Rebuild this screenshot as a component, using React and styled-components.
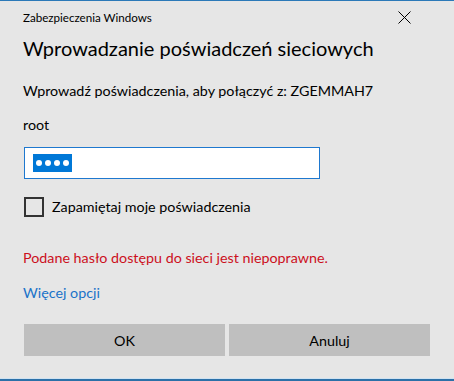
import React from 'react';
import styled, { createGlobalStyle } from 'styled-components';

const GlobalStyle = createGlobalStyle`
  html, body {
    margin: 0;
    padding: 0;
    background: #e6e6e6;
  }
  * {
    box-sizing: border-box;
  }
`;

const Window = styled.div`
  width: 454px;
  height: 381px;
  display: flex;
  flex-direction: column;
  background: #e6e6e6;
  border-top: 1px solid #2b79b8;
  border-bottom: 2px solid #2c70a8;
  box-shadow: inset 0 -1px 0 #cfe2f1;
  font-family: 'Segoe UI', Lato, 'Noto Sans', sans-serif;
  color: #000;
`;

const TitleBar = styled.div`
  height: 33px;
  display: flex;
  align-items: center;
  justify-content: space-between;
  padding: 0 43px 0 23px;
  font-size: 11.6px;
  color: #000;
`;

const Content = styled.div`
  display: flex;
  flex-direction: column;
  align-items: flex-start;
  padding: 0 24px 0 23px;
`;

const Heading = styled.h1`
  margin: 0;
  font-size: 20px;
  font-weight: 400;
  line-height: 28px;
`;

const Text = styled.div`
  font-size: 14.3px;
  line-height: 20px;
  margin-top: ${p => p.$gap}px;
  color: ${p => p.$color || '#000'};
`;

const Field = styled.div`
  margin: 12px 0 0 1px;
  width: 296px;
  height: 32px;
  background: #fff;
  border: 1px solid #1e78cf;
  display: flex;
  align-items: center;
  padding-left: 8px;
`;

const Selection = styled.span`
  display: flex;
  align-items: center;
  gap: 3px;
  height: 18px;
  padding: 0 3px;
  background: #0078d7;
`;

const Dot = styled.span`
  width: 6px;
  height: 6px;
  border-radius: 50%;
  background: #fff;
`;

const CheckRow = styled.label`
  margin: 18px 0 0 1px;
  display: flex;
  align-items: center;
  gap: 8px;
  font-size: 14.3px;
  line-height: 20px;
`;

const Box = styled.span`
  width: 20px;
  height: 20px;
  border: 2px solid #333;
`;

const Link = styled.a`
  font-size: 14.3px;
  line-height: 20px;
  margin-top: 15px;
  color: #1a73c9;
  text-decoration: none;
`;

const Buttons = styled.div`
  margin: 21px 0 0 1px;
  width: 406px;
  display: grid;
  grid-template-columns: 1fr 1fr;
  gap: 4px;
`;

const Button = styled.button`
  height: 32px;
  border: none;
  background: #bfbfbf;
  font-family: inherit;
  font-size: 14.3px;
  color: #000;
  padding: 0;
`;

const CloseIcon = () => (
  <svg width="13" height="13" viewBox="0 0 13 13">
    <path d="M0.5 0.5 L12.5 12.5 M12.5 0.5 L0.5 12.5" stroke="#000" strokeWidth="1" fill="none" />
  </svg>
);

const App = () => (
  <>
    <GlobalStyle />
    <Window>
      <TitleBar>
        <span>Zabezpieczenia Windows</span>
        <CloseIcon />
      </TitleBar>
      <Content>
        <Heading>Wprowadzanie poświadczeń sieciowych</Heading>
        <Text $gap={19}>Wprowadź poświadczenia, aby połączyć z: ZGEMMAH7</Text>
        <Text $gap={14}>root</Text>
        <Field>
          <Selection>
            <Dot />
            <Dot />
            <Dot />
            <Dot />
          </Selection>
        </Field>
        <CheckRow>
          <Box />
          Zapamiętaj moje poświadczenia
        </CheckRow>
        <Text $gap={31} $color="#cc101d">Podane hasło dostępu do sieci jest niepoprawne.</Text>
        <Link href="#">Więcej opcji</Link>
        <Buttons>
          <Button>OK</Button>
          <Button>Anuluj</Button>
        </Buttons>
      </Content>
    </Window>
  </>
);

export default App;
